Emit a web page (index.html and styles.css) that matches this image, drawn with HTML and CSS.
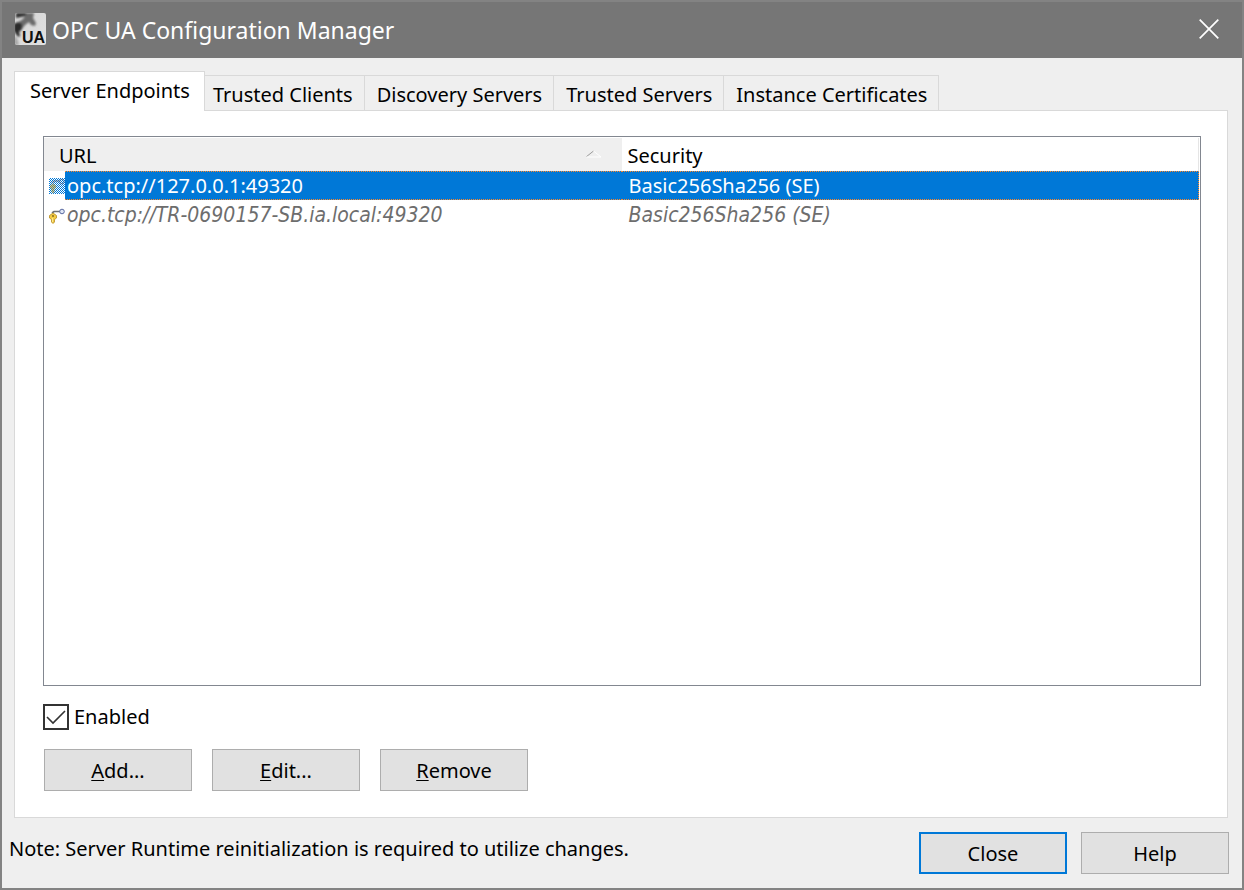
FILE: index.html
```html
<!DOCTYPE html>
<html lang="en">
<head>
<meta charset="utf-8">
<title>OPC UA Configuration Manager</title>
<link rel="stylesheet" href="styles.css">
</head>
<body>
<main class="window">
  <header class="titlebar">
    <svg class="app-icon" viewBox="0 0 32 32" aria-hidden="true">
      <defs>
        <linearGradient id="paper" x1="0" y1="0" x2="1" y2="1"><stop offset="0" stop-color="#d4d4d4"/><stop offset="1" stop-color="#e2e2e2"/></linearGradient>
        <filter id="soft" x="-20%" y="-20%" width="140%" height="140%"><feGaussianBlur stdDeviation="0.8"/></filter>
        <clipPath id="tile"><rect x="1" width="31" height="32" rx="2"/></clipPath>
      </defs>
      <g clip-path="url(#tile)">
        <rect width="32" height="32" fill="url(#paper)"/>
        <g filter="url(#soft)">
          <path d="M2 0h11l-1 3-5 1-5 1z" fill="#303030"/>
          <path d="M13 0h7l-1 5 3 5-1 3-4-1-2-3-4 3-3 4-4 3-3-4 2-5 6-4z" fill="#6a6a6a"/>
          <path d="M0 11l4-2 4 2v5l-3 3 1 4-2 1-4-6z" fill="#2c2c2c"/>
          <path d="M0 23l3 2 2 7H0z" fill="#a8a8a8"/>
        </g>
      </g>
      <text class="app-icon-text" x="8" y="30">UA</text>
    </svg>
    <h1 class="title">OPC UA Configuration Manager</h1>
    <button class="window-close" type="button" aria-label="Close window">
      <svg viewBox="0 0 20 20" width="20" height="20" aria-hidden="true"><path d="M.7.7l18.6 18.6M19.3.7L.7 19.3" stroke="#fff" stroke-width="1.7"/></svg>
    </button>
  </header>

  <div class="content">
    <div class="tabs" role="tablist">
      <button class="tab tab-active" type="button" role="tab" aria-selected="true">Server Endpoints</button>
      <button class="tab tab-next" type="button" role="tab" aria-selected="false">Trusted Clients</button>
      <button class="tab" type="button" role="tab" aria-selected="false">Discovery Servers</button>
      <button class="tab" type="button" role="tab" aria-selected="false">Trusted Servers</button>
      <button class="tab" type="button" role="tab" aria-selected="false">Instance Certificates</button>
    </div>

    <section class="panel" role="tabpanel">
      <div class="list">
        <table class="endpoints">
          <thead>
            <tr>
              <th class="col-url" scope="col"><div class="head-sorted">URL
                <svg class="sort" viewBox="0 0 18 8" width="18" height="8" aria-hidden="true"><path d="M1 7L8.500 1" stroke="#9a9a9a" fill="none"/><path d="M8.500 1L16 7H1" stroke="#fff" fill="none"/></svg></div>
              </th>
              <th class="col-security" scope="col">Security</th>
            </tr>
          </thead>
          <tbody>
            <tr class="row-selected">
              <td><div class="cell">
                <svg class="endpoint-icon endpoint-icon-selected" viewBox="0 0 16 16" width="16" height="16" aria-hidden="true">
                  <g opacity=".5"><path d="M3 5l2-2h6" stroke="#4d5a75" stroke-width="1.500" fill="none"/><circle cx="13" cy="3.500" r="2.300" fill="none" stroke="#384870"/>
                  <path d="M4 5.500l3 2v2L5.500 11v3L4 15.500 2.500 14v-3L1 9.500v-2z" fill="#b09020"/></g>
                </svg><span class="url">opc.tcp://127.0.0.1:49320</span></div></td>
              <td class="security">Basic256Sha256 (SE)</td>
            </tr>
            <tr class="row-disabled">
              <td><div class="cell">
                <svg class="endpoint-icon" viewBox="0 0 16 16" width="16" height="16" aria-hidden="true">
                  <path d="M3 5l2-1.500h6" stroke="#6d7075" stroke-width="1.600" fill="none"/><circle cx="13" cy="3.500" r="2.300" fill="#dfe6f5" stroke="#5868a0"/>
                  <path d="M4 5l3.500 2.500v2.500L5.500 11.500V14L4 15.500 2.500 14v-2.500L.5 10V7.500z" fill="#f2cb45" stroke="#b58a20" stroke-width=".8"/><circle cx="4" cy="8" r=".9" fill="#7d611a"/><path d="M3.500 10v4" stroke="#fff0a0" stroke-width=".8"/>
                </svg><span class="url">opc.tcp://TR-0690157-SB.ia.local:49320</span></div></td>
              <td class="security">Basic256Sha256 (SE)</td>
            </tr>
          </tbody>
        </table>
      </div>

      <label class="enabled"><input class="checkbox" type="checkbox" checked><span>Enabled</span></label>

      <div class="actions">
        <button class="button" type="button"><u>A</u>dd...</button>
        <button class="button" type="button"><u>E</u>dit...</button>
        <button class="button" type="button"><u>R</u>emove</button>
      </div>
    </section>
  </div>

  <footer class="footer">
    <p class="note">Note: Server Runtime reinitialization is required to utilize changes.</p>
    <button class="button button-default" type="button">Close</button>
    <button class="button" type="button">Help</button>
  </footer>
</main>
</body>
</html>
```
FILE: styles.css
```css
* { box-sizing: border-box; }

body {
  margin: 0;
  color: #000;
  font: 20px/28px "Noto Sans", Tahoma, sans-serif;
}

button {
  margin: 0;
  color: inherit;
  font: inherit;
}

.window {
  display: flex;
  flex-direction: column;
  min-height: 100vh;
  border: 2px solid #838383;
  background: #efefef;
}

.titlebar {
  display: flex;
  align-items: center;
  height: 56px;
  padding: 0 12px;
  background: #767676;
  color: #fff;
}

.app-icon {
  width: 32px;
  height: 32px;
  margin: 0 6px 2px 0;
}

.app-icon-text {
  font: bold 16px "Liberation Sans", sans-serif;
  fill: #101010;
}

.title {
  flex: 1;
  margin: 0;
  font-size: 23px;
  font-weight: 400;
}

.window-close {
  display: grid;
  place-items: center;
  width: 42px;
  height: 42px;
  margin-bottom: 2px;
  padding: 0;
  border: 0;
  background: none;
}

.content {
  display: flex;
  flex: 1;
  flex-direction: column;
  padding: 13px 14px 0 12px;
}

.tabs {
  display: flex;
  align-items: flex-end;
}

.tab {
  height: 35px;
  padding: 3px 11px 0 12px;
  border: 1px solid #d9d9d9;
  border-width: 1px 1px 0 0;
  background: #efefef;
  white-space: nowrap;
}

.tab-next { padding-left: 8px; }

.tab-active {
  z-index: 1;
  height: 40px;
  margin-bottom: -1px;
  padding: 0 14px 2px 15px;
  border-width: 1px 1px 0;
  background: #fff;
}

.panel {
  display: flex;
  flex: 1;
  flex-direction: column;
  padding: 25px 26px 26px 28px;
  border: 1px solid #d9d9d9;
  background: #fff;
}

.list {
  flex: 1;
  padding: 1px 1px 0 0;
  border: 1px solid #828790;
}

.endpoints {
  width: 100%;
  border-spacing: 0;
  table-layout: fixed;
}

.endpoints th {
  height: 33px;
  padding: 2px 0 0 6px;
  font-weight: 400;
  text-align: left;
}

.endpoints .col-url {
  width: 50%;
  padding-left: 15px;
  background: #efefef;
}

.endpoints .col-security { border-right: 1px solid #e5e5e5; }

.head-sorted {
  display: flex;
  align-items: center;
  justify-content: space-between;
  padding-right: 19px;
}

.sort { margin-bottom: 4px; }

.endpoints td {
  height: 29px;
  padding: 0;
}

.cell {
  display: flex;
  align-items: center;
  padding-left: 5px;
}

.endpoint-icon-selected {
  background: repeating-conic-gradient(#0078d7 0 25%, #fff 0 50%) 0 0 / 2px 2px;
}

.url {
  flex: 1;
  padding-left: 2px;
}

.endpoints .security { padding-left: 7px; }

.row-selected { color: #fff; }

.row-selected .url,
.row-selected .security {
  border: 1px dotted #ff8728;
  border-width: 1px 0;
  background: #0078d7;
  line-height: 27px;
}

.row-selected .security { border-right-width: 1px; }

.row-disabled {
  color: #6d6d6d;
  font: oblique 21px/31px "DejaVu Sans Condensed", "DejaVu Sans", sans-serif;
}

.enabled {
  display: flex;
  align-items: center;
  align-self: flex-start;
  gap: 5px;
  margin-top: 17px;
}

.checkbox {
  width: 26px;
  height: 26px;
  margin: 0;
  border: 2px solid #333;
  appearance: none;
  background: #fff url("data:image/svg+xml,%3Csvg xmlns='http://www.w3.org/2000/svg' viewBox='0 0 22 22'%3E%3Cpath d='M2 11l6 6L20 5' fill='none' stroke='%23333' stroke-width='1.6'/%3E%3C/svg%3E") center / 22px no-repeat;
}

.actions {
  display: flex;
  gap: 20px;
  margin: 18px 0 0 1px;
}

.button {
  width: 148px;
  height: 42px;
  padding: 2px 0 0;
  border: 1px solid #adadad;
  background: #e1e1e1;
}

.button u {
  text-decoration-thickness: 1px;
  text-underline-offset: 2px;
}

.button-default { border: 2px solid #0078d7; }

.footer {
  display: flex;
  gap: 14px;
  padding: 14px 13px 14px 7px;
}

.note {
  flex: 1;
  margin: 3px 0 0;
}
```
